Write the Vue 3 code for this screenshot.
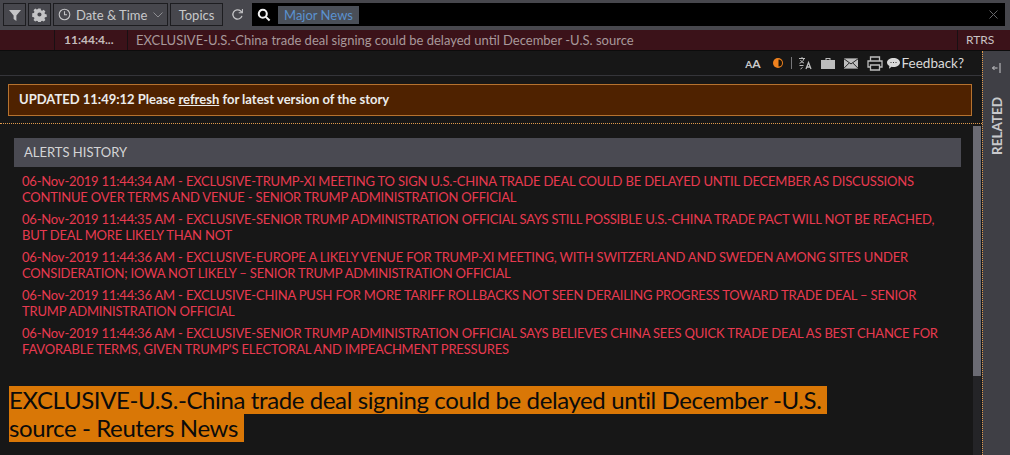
<template>
  <div class="screen">
    <header class="toolbar">
      <button class="tool square">
        <svg width="14" height="14" viewBox="0 0 14 14"><path d="M1 2h12L8.400 7.400V13L5.600 11V7.400z" fill="#c4c4c6" /></svg>
      </button>
      <button class="tool square">
        <svg width="15" height="15" viewBox="0 0 16 16"><path fill="#c4c4c6" fill-rule="evenodd" d="M6.600 1h2.800l.4 2 1.300.6 1.800-1.100 2 2-1.100 1.800.6 1.300 2 .4v2.800l-2 .4-.6 1.300 1.100 1.800-2 2-1.800-1.100-1.300.6-.4 2H6.600l-.4-2-1.300-.6-1.800 1.100-2-2 1.100-1.800-.6-1.300-2-.4V6.600l2-.4.6-1.300-1.100-1.800 2-2 1.800 1.100 1.300-.6zM8 5.600a2.400 2.400 0 1 0 0 4.800 2.400 2.400 0 0 0 0-4.800z" transform="translate(0.6 0.6) scale(0.92)" /></svg>
      </button>
      <button class="tool date">
        <svg width="13" height="13" viewBox="0 0 13 13" fill="none" stroke="#c4c4c6" stroke-width="1.100"><circle cx="6.500" cy="6.500" r="5.300" /><path d="M6.500 3.200v3.500h2.500" /></svg>
        <span>Date &amp; Time</span>
        <svg class="chev" width="10" height="6" viewBox="0 0 10 6" fill="none" stroke="#8e8e92"><path d="M.5.500 5 5 9.500.500" /></svg>
      </button>
      <button class="tool topics">Topics</button>
      <svg class="reload" width="13" height="13" viewBox="0 0 14 14" fill="none" stroke="#c4c4c6" stroke-width="1.400"><path d="M11.800 8.500A5 5 0 1 1 10.400 3.300L12 4.800" /><path d="M12.300 1v4.200H8.300" stroke-width="1.100" /></svg>
      <div class="search">
        <svg width="14" height="14" viewBox="0 0 15 15" fill="none" stroke="#f2f2f2" stroke-width="2.200"><circle cx="6.200" cy="6.200" r="4.300" /><path d="m9.500 9.500 4 4" /></svg>
        <span class="tag">Major News</span>
        <svg class="clear" width="9" height="9" viewBox="0 0 9 9" stroke="#66666a"><path d="m.5.500 8 8M8.500.500l-8 8" /></svg>
      </div>
    </header>

    <div class="ticker">
      <div class="cell flag"></div>
      <div class="cell time">11:44:4...</div>
      <div class="cell story">EXCLUSIVE-U.S.-China trade deal signing could be delayed until December -U.S. source</div>
      <div class="cell source">RTRS</div>
    </div>

    <div class="body">
      <main class="main">
        <div class="actions">
          <span class="aa"><small>A</small>A</span>
          <svg class="contrast" width="10" height="10" viewBox="0 0 10 10"><circle cx="5" cy="5" r="5" fill="#f0821e" /><path d="M5.500 1.500a3.500 3.500 0 0 1 0 7z" fill="#1c1408" /></svg>
          <span class="sep"></span>
          <svg width="14" height="14" viewBox="0 0 14 14" fill="none" stroke="#bdbdbd"><path d="M1 2.500h6M4 1v1.500M6 2.500C5.500 5 3.500 6.500 1.500 7.300M2.500 4c.8 1.500 2 2.500 3.500 3M1.500 9.500h4M4.500 11.500l-2 1.500" /><path d="M8 13l2.500-6.500L13 13M8.900 11h3.200" stroke-width="1.300" /></svg>
          <svg width="14" height="12" viewBox="0 0 14 12"><path fill="#bdbdbd" d="M0 3h14v9H0zM4.500 3V1h5v2H8.500V2h-3v1z" /></svg>
          <svg width="14" height="11" viewBox="0 0 15 11"><rect width="15" height="11" fill="#bdbdbd" /><path d="m0 .5 7.500 5.500L15 .5M0 10.500l5.500-5.500M15 10.500 9.500 5" stroke="#1a1a1a" fill="none" /></svg>
          <svg width="16" height="15" viewBox="0 0 16 15" fill="none" stroke="#bdbdbd" stroke-width="1.300"><path d="M3.500 5V1h9v4M3.500 11H1V5h14v6h-2.500" /><path d="M3.500 9h9v5h-9z" /></svg>
          <span class="feedback">
            <svg width="13" height="11" viewBox="0 0 13 11"><path fill="#d8d8d8" d="M6.500 0C10 0 13 1.900 13 4.500S10 9 6.500 9c-.7 0-1.300-.1-1.900-.2L2 10.800l.4-2.800C.9 7.200 0 6 0 4.500 0 1.900 3 0 6.500 0z" /><path d="M3.500 4.500h1M6 4.500h1M8.500 4.500h1" stroke="#333" stroke-width="1.200" /></svg>
            Feedback?
          </span>
        </div>

        <div class="banner-wrap">
          <div class="banner">UPDATED 11:49:12 Please <u>refresh</u> for latest version of the story</div>
        </div>

        <div class="scroller">
          <div class="scroll-content">
            <section class="history">
              <h2>ALERTS HISTORY</h2>
              <p v-for="(alert, i) in alerts" :key="i">{{ alert }}</p>
            </section>
            <h1>
              <span>EXCLUSIVE-U.S.-China trade deal signing could be delayed until December -U.S.</span>
              <span>source - Reuters News</span>
            </h1>
          </div>
          <div class="track"><div class="thumb"></div></div>
        </div>
      </main>

      <aside class="side">
        <svg class="collapse" width="9" height="10" viewBox="0 0 9 10" fill="none" stroke="#c9c9cc"><path d="M.5 5h5M2.500 3 .5 5l2 2M8 0v10" /></svg>
        <span class="related">RELATED</span>
      </aside>
    </div>
  </div>
</template>

<script setup>
const alerts = [
  "06-Nov-2019 11:44:34 AM - EXCLUSIVE-TRUMP-XI MEETING TO SIGN U.S.-CHINA TRADE DEAL COULD BE DELAYED UNTIL DECEMBER AS DISCUSSIONS CONTINUE OVER TERMS AND VENUE - SENIOR TRUMP ADMINISTRATION OFFICIAL",
  "06-Nov-2019 11:44:35 AM - EXCLUSIVE-SENIOR TRUMP ADMINISTRATION OFFICIAL SAYS STILL POSSIBLE U.S.-CHINA TRADE PACT WILL NOT BE REACHED, BUT DEAL MORE LIKELY THAN NOT",
  "06-Nov-2019 11:44:36 AM - EXCLUSIVE-EUROPE A LIKELY VENUE FOR TRUMP-XI MEETING, WITH SWITZERLAND AND SWEDEN AMONG SITES UNDER CONSIDERATION; IOWA NOT LIKELY – SENIOR TRUMP ADMINISTRATION OFFICIAL",
  "06-Nov-2019 11:44:36 AM - EXCLUSIVE-CHINA PUSH FOR MORE TARIFF ROLLBACKS NOT SEEN DERAILING PROGRESS TOWARD TRADE DEAL – SENIOR TRUMP ADMINISTRATION OFFICIAL",
  "06-Nov-2019 11:44:36 AM - EXCLUSIVE-SENIOR TRUMP ADMINISTRATION OFFICIAL SAYS BELIEVES CHINA SEES QUICK TRADE DEAL AS BEST CHANCE FOR FAVORABLE TERMS, GIVEN TRUMP'S ELECTORAL AND IMPEACHMENT PRESSURES",
];
</script>

<style>
html, body { background: #171717; }
</style>

<style scoped>
.screen {
  width: 1010px;
  height: 455px;
  overflow: hidden;
  display: flex;
  flex-direction: column;
  background: #171717;
  font-family: Lato, "Liberation Sans", sans-serif;
  font-size: 13px;
}
.toolbar {
  height: 30px;
  flex: none;
  display: flex;
  align-items: flex-start;
  gap: 2px;
  padding: 3px 5px 0 3px;
  box-sizing: border-box;
  background: #47474d;
}
.tool {
  height: 23px;
  padding: 0;
  display: flex;
  align-items: center;
  justify-content: center;
  box-sizing: border-box;
  border: 1px solid #1d1d20;
  background: #47474d;
  color: #c8c8ca;
  font: inherit;
  font-size: 13px;
}
.square { width: 23px; }
.date { width: 115px; justify-content: flex-start; padding-left: 4px; gap: 5px; }
.chev { margin-left: 1px; }
.topics { width: 53px; }
.reload { margin: 5px 6px 0 6px; }
.search {
  flex: 1;
  height: 23px;
  display: flex;
  align-items: center;
  padding: 0 7px 0 5px;
  background: #000;
}
.tag {
  margin-left: 7px;
  padding: 2px 6px;
  background: #4a4f58;
  color: #5a92d0;
  font-size: 13px;
  line-height: 14px;
}
.clear { margin-left: auto; }
.ticker {
  height: 20px;
  flex: none;
  display: flex;
  background: #3b1219;
  border-bottom: 1px solid #0c0c0c;
  line-height: 20px;
  font-size: 13px;
}
.cell { border-right: 1px solid #191013; box-sizing: border-box; }
.flag { width: 55px; }
.time { width: 73px; padding-left: 9px; font-size: 12px; font-weight: 700; color: #c4bcbc; }
.story { width: 830px; padding-left: 8px; color: #a8999b; }
.source { flex: 1; border: 0; padding-left: 8px; font-size: 12px; color: #c9c2c4; }
.body { flex: 1; min-height: 0; display: flex; }
.main { flex: 1; min-width: 0; display: flex; flex-direction: column; }
.actions {
  height: 25px;
  flex: none;
  display: flex;
  align-items: center;
  justify-content: flex-end;
  gap: 9px;
  padding-right: 18px;
  box-sizing: border-box;
  border-bottom: 1px solid #35353a;
  color: #dadada;
}
.aa { font-size: 12px; font-weight: 700; color: #c9c9c9; margin-right: 3px; }
.aa small { font-size: 10px; }
.contrast { margin-right: -1px; }
.sep { width: 1px; height: 12px; background: #77777a; margin-right: -3px; }
.feedback { display: flex; align-items: center; gap: 2px; margin-left: -5px; font-size: 13.500px; }
.banner-wrap {
  flex: none;
  padding: 8px 10px 7px 8px;
  border-bottom: 1px dotted #e09a4c;
}
.banner {
  height: 32px;
  box-sizing: border-box;
  padding-left: 10px;
  border: 1px solid #b6722f;
  background: #4f2200;
  color: #ececec;
  font-weight: 700;
  font-size: 13px;
  line-height: 29px;
}
.scroller { flex: 1; min-height: 0; display: flex; }
.scroll-content { flex: 1; min-width: 0; padding: 14px 0 0 14px; }
.history { width: 947px; }
.history h2 {
  margin: 0 0 6px;
  height: 29px;
  padding-left: 10px;
  background: #4a4a52;
  color: #d4d4d6;
  font-size: 13px;
  font-weight: 400;
  line-height: 29px;
}
.history p {
  margin: 0 0 6px;
  padding: 0 8px;
  color: #e83a50;
  font-size: 13px;
  letter-spacing: -0.19px;
  line-height: 16px;
}
h1 {
  margin: 29px 0 0 -5px;
  font-size: 24px;
  font-weight: 400;
  letter-spacing: -0.39px;
  line-height: 28px;
  color: #0b0b0b;
}
h1 span {
  display: block;
  width: fit-content;
  padding-right: 6px;
  background: #d97706;
}
.track { width: 8px; flex: none; margin: 2px 1px 0 0; background: #242427; }
.thumb { height: 250px; background: #6b6b73; }
.side {
  width: 28px;
  flex: none;
  display: flex;
  flex-direction: column;
  align-items: center;
  background: #3f3f45;
  border-left: 1px dotted #e09a4c;
  box-sizing: border-box;
  color: #c9c9cc;
}
.collapse { margin-top: 12px; }
.related {
  margin-top: 24px;
  writing-mode: vertical-rl;
  transform: rotate(180deg);
  font-size: 13.500px;
  font-weight: 700;
}
</style>
